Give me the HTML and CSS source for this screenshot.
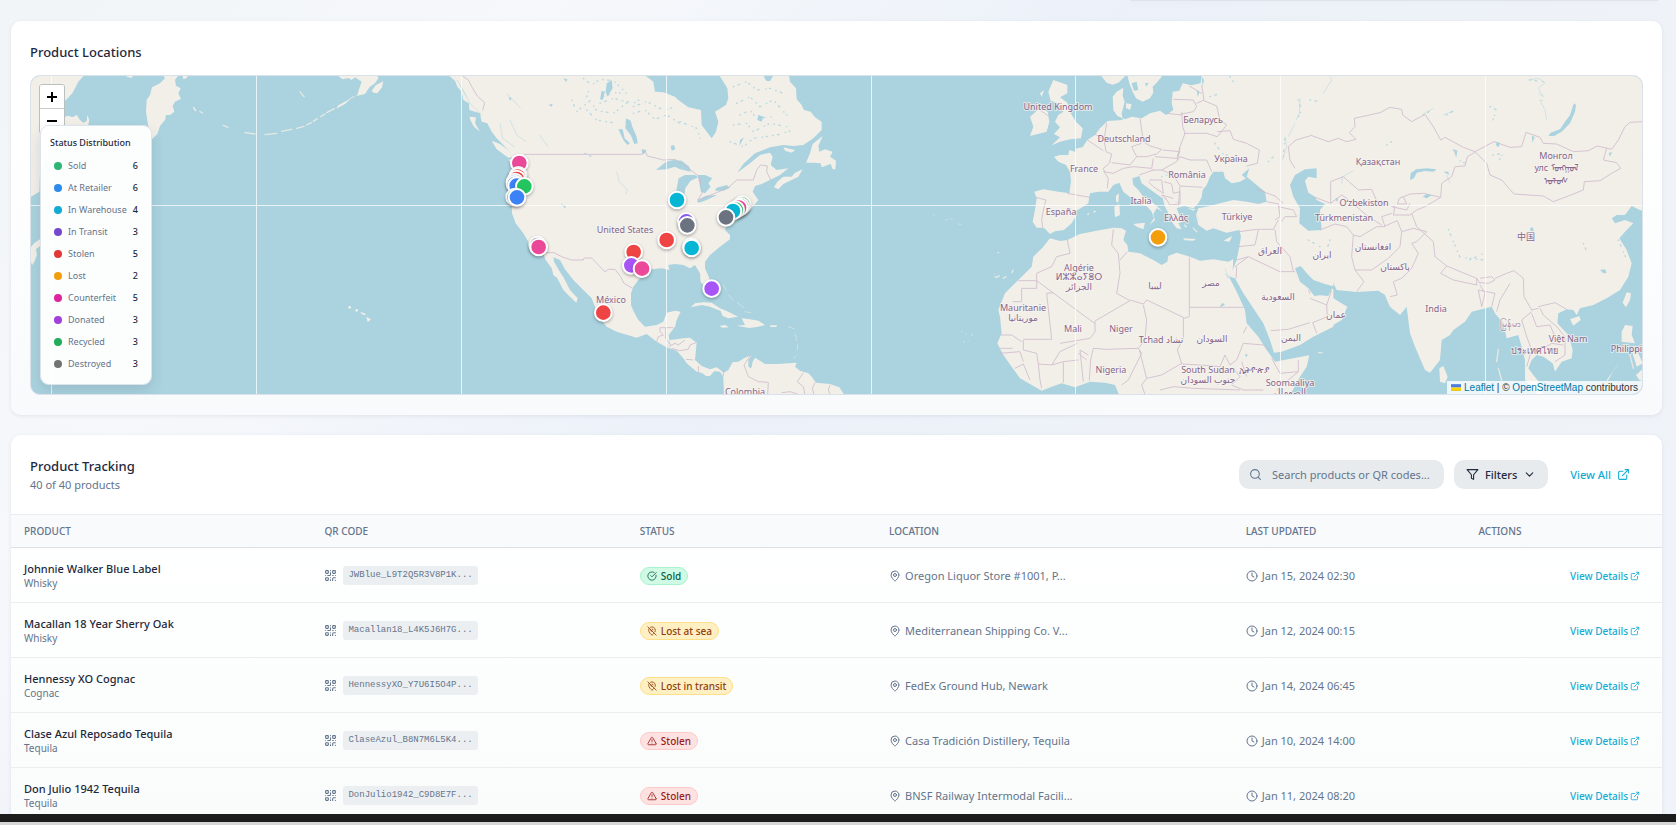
FILE: index.html
```html
<!DOCTYPE html>
<html lang="en">
<head>
<meta charset="utf-8">
<title>Product Tracking</title>
<link rel="stylesheet" href="styles.css">
</head>
<body>
<svg class="sprite" aria-hidden="true">
  <symbol id="i-search" viewBox="0 0 24 24"><circle cx="11" cy="11" r="8"/><path d="m21 21-4.3-4.3"/></symbol>
  <symbol id="i-filter" viewBox="0 0 24 24"><path d="M22 3H2l8 9.46V19l4 2v-8.54L22 3z"/></symbol>
  <symbol id="i-chevron" viewBox="0 0 24 24"><path d="m6 9 6 6 6-6"/></symbol>
  <symbol id="i-external" viewBox="0 0 24 24"><path d="M15 3h6v6"/><path d="M10 14 21 3"/><path d="M18 13v6a2 2 0 0 1-2 2H5a2 2 0 0 1-2-2V8a2 2 0 0 1 2-2h6"/></symbol>
  <symbol id="i-clock" viewBox="0 0 24 24"><circle cx="12" cy="12" r="10"/><path d="M12 6v6l4 2"/></symbol>
  <symbol id="i-pin" viewBox="0 0 24 24"><path d="M20 10c0 4.99-5.54 10.19-7.4 11.8a1 1 0 0 1-1.2 0C9.54 20.19 4 14.99 4 10a8 8 0 0 1 16 0"/><circle cx="12" cy="10" r="3"/></symbol>
  <symbol id="i-pin-off" viewBox="0 0 24 24"><path d="M12.75 7.09a3 3 0 0 1 2.16 2.16"/><path d="M17.07 17.07c-1.63 2.17-3.53 3.9-4.47 4.73a1 1 0 0 1-1.2 0C9.54 20.19 4 14.99 4 10a8 8 0 0 1 1.43-4.57"/><path d="m2 2 20 20"/><path d="M8.47 2.82A8 8 0 0 1 20 10c0 1.18-.31 2.38-.82 3.53"/><path d="M9.16 9.16a3 3 0 0 0 3.68 3.68"/></symbol>
  <symbol id="i-check" viewBox="0 0 24 24"><path d="M21.8 10A10 10 0 1 1 17 3.34"/><path d="m9 11 3 3L22 4"/></symbol>
  <symbol id="i-alert" viewBox="0 0 24 24"><path d="m21.73 18-8-14a2 2 0 0 0-3.48 0l-8 14A2 2 0 0 0 4 21h16a2 2 0 0 0 1.73-3"/><path d="M12 9v4"/><path d="M12 17h.01"/></symbol>
  <symbol id="i-qr" viewBox="0 0 24 24"><rect x="3" y="3" width="5" height="5" rx="1"/><rect x="16" y="3" width="5" height="5" rx="1"/><rect x="3" y="16" width="5" height="5" rx="1"/><path d="M21 16h-3a2 2 0 0 0-2 2v3M21 21v.01M12 7v3a2 2 0 0 1-2 2H7M3 12h.01M12 3h.01M12 16v.01M16 12h1M21 12v.01M12 21v-1"/></symbol>
</svg>

<main class="page">
  <div class="previous-card"></div>

  <section class="card locations">
    <h2 class="card-title">Product Locations</h2>
    <div class="map">
      <svg class="map-canvas" viewBox="31 76 1611 318" preserveAspectRatio="xMidYMid slice" role="img" aria-label="World map of product locations">
        <!-- North Pacific -->
        <g class="land" transform="scale(.33333)">
          <path d="M90,226H252L235,245 217,280 195,303 193,375 160,430 120,520 118,575 90,592Z"/>
          <path d="M195,350 205,347 217,352 230,345 240,360 250,368 260,363 262,345 268,360 264,378H195Z"/>
          <path d="M490,226H535L525,240 528,257 542,265 535,280 543,296 525,305 518,318 523,335 510,345 498,345 495,360 480,378 472,402 456,418 444,375 438,335 440,300 450,285 456,262 480,250 495,235Z"/>
          <path d="M90,745 104,728 120,718V738L108,748 111,765 103,785 96,796 90,775Z"/>
          <path d="M1018,230 1028,238 1045,234 1055,240 1065,232 1085,245 1078,265 1072,285 1050,298 1035,312 1008,326 1015,316 1040,302 1058,290 1095,282 1108,262 1125,250 1135,235 1132,226H1015Z"/>
          <path d="M1115,272 1128,255 1150,244 1146,262 1132,280 1120,278Z"/>
          <path d="M378,226H402L394,233 382,231ZM548,226H565L560,234 550,238ZM578,320 583,322 590,334 584,332Z"/>
          <path class="islands" d="M1003,326 980,338M975,342 962,350M952,356 940,364M934,368 920,375M912,379 890,385M875,388 845,394M830,400 795,404M765,402 735,398M670,376 684,382M600,335 608,339M900,275 912,290"/>
          <circle cx="1049" cy="922" r="4"/><circle cx="1070" cy="931" r="4"/><path d="M1080,936 1094,940 1098,945 1088,944ZM1099,950 1113,958 1103,967Z"/>
        </g>
        <!-- Americas -->
        <g transform="translate(400 60) scale(.33333)">
          <g class="land">
            <path d="M146,46 165,62 172,80 185,95 190,120 207,130 208,150 240,160 245,185 262,190 275,215 290,235 325,270 345,300 325,298 338,320 333,350 325,410 335,430 336,460 347,490 370,520 385,545 410,552 430,580 437,600 455,625 460,645 472,655 490,690 510,710 529,728 533,715 510,690 492,655 475,628 462,605 460,592 480,600 495,628 520,660 550,690 575,715 585,740 600,775 620,800 650,815 710,833 740,822 770,845 800,862 830,872 850,895 860,910 890,935 905,938 918,948 930,948 943,933 960,935 970,950 972,1006H1334L1318,982 1290,972 1248,968 1235,950 1225,940 1200,932 1185,920 1190,908 1130,912 1095,912 1065,893 1058,905 1054,925 1045,920 1045,900 1055,885 1035,893 1015,905 998,907 985,930 972,938 950,922 930,928 905,918 885,900 890,848 870,833 850,835 830,838 808,840 806,825 825,800 830,780 842,755 825,752 800,758 790,785 770,795 735,800 715,780 700,752 693,735 693,700 700,680 715,660 755,628 785,625 808,630 805,615 825,612 850,615 870,625 885,615 900,640 902,665 918,685 935,690 928,655 915,625 915,605 930,585 960,560 990,538 990,525 975,510 985,480 997,492 1020,470 1050,450 1075,420 1058,395 1065,378 1085,372 1110,360 1140,345 1165,325 1130,330 1112,315 1118,290 1110,278 1080,285 1050,310 1012,338 1030,312 1065,280 1110,262 1150,255 1180,258 1210,255 1240,235 1265,210 1265,185 1245,172 1232,155 1212,150 1205,135 1190,118 1188,85 1170,65 1167,46H958L970,65 982,85 985,115 978,135 945,155 955,185 948,215 935,235 905,195 903,150 865,142 835,120 825,110 790,97 765,95 760,65 735,46Z"/>
            <path d="M1122,382 1132,365 1150,350 1175,350 1185,338 1208,328 1195,350 1150,372 1135,388ZM1150,262 1185,270 1175,278 1155,272ZM1218,308 1230,280 1238,252 1268,228 1255,258 1258,275 1275,268 1298,275 1290,290 1308,302 1306,328 1298,328 1292,312 1265,322 1262,310 1240,308Z"/>
            <path d="M275,242 300,252 325,270 342,292 325,293 290,268ZM208,170 228,172 225,190 240,215 222,200 212,182Z"/>
            <path d="M872,742 885,730 910,727 935,728 960,745 985,755 1014,770 985,775 968,768 962,753 930,740 905,735ZM1010,797 1035,795 1025,775 1050,778 1075,782 1095,795 1075,800 1048,804ZM958,798 975,795 987,802 968,803ZM1110,796H1130V801H1112Z"/>
            <path class="islands faint" d="M970,675 978,690M985,705 1000,720M1012,728 1030,742M1035,755 1052,758M1165,800 1182,806M1186,822 1190,842M1193,852 1192,870M1190,885 1180,895"/>
          </g>
          <g class="water">
            <path d="M768,330 798,305 820,300 845,302 868,320 872,335 840,328 825,320 800,328ZM828,395 836,355 855,345 885,345 895,352 872,362 856,385 852,415 840,420ZM893,345 915,345 937,355 925,370 932,380 915,400 903,395ZM890,423 918,407 952,405 920,420 897,428ZM945,392 950,383 980,375 990,383 970,392Z"/>
            <path d="M678,175 692,182 697,200 710,230 713,250 703,252 692,225 676,205ZM655,208 668,208 674,235 690,250 682,255 670,240ZM812,258 822,255 826,268 815,272ZM725,268 740,270 732,282 726,280ZM620,70 635,60 638,85 622,110 617,95ZM605,92 615,95 608,120 600,118ZM1090,46 1120,46 1110,64 1098,62ZM1075,165 1090,170 1085,185 1072,180ZM1020,240 1032,232 1018,258ZM483,430 498,440 494,444ZM490,55 502,58 498,66ZM445,134 458,132 455,140ZM325,110 335,116 330,122Z"/>
            <path class="lakes" d="M550,55 575,75 600,58 640,62 670,90 M515,120 530,155 570,122 590,152 640,160 680,130 M560,150 590,180 650,190 M600,130 640,115 700,130 730,112 M610,110 640,98 690,100 M700,160 735,150 765,178 800,165 840,190 M700,140 740,125 790,150 830,140 M840,185 890,205 900,235 M1000,80 1040,65 1070,90 1110,85 1150,100 M1010,130 1050,110 1080,140 1120,120 1160,165 M1000,195 1040,190 1060,215 1110,190 1160,200 M990,245 1030,260 1060,235 1130,225 1180,210 M555,280 585,295 M1020,165 1050,150 1070,175 1120,170 M560,110 565,95"/>
            <path class="creeks" d="M650,335 658,365 682,390 678,402M330,180 350,225 378,245M300,190 308,235 345,262M172,60 210,130 245,165M180,75 200,110M320,100 362,145M418,225 445,260M800,860 812,840"/>
          </g>
          <g class="border">
            <path d="M188,48 205,60 215,80 232,108 254,128 248,152M372,283H727L735,273 742,288 770,295 790,300 825,298 862,322 900,352 906,400 893,420 945,400 985,383 1010,360 1060,360 1070,330 1082,315 1102,318 1100,335 1112,360"/>
            <path d="M432,578 462,578 485,590 515,600 550,600 552,594 575,594 600,620 615,636 625,628 645,628 662,650 672,670 698,685"/>
            <path d="M770,845 775,830 790,825 780,815V803H820M797,803V835L812,855M806,860 825,850 835,855 855,840M815,865 838,872 865,868 870,855 888,848M858,898 880,900M895,918V938M970,948V930"/>
            <path d="M1052,885 1032,915 1045,950 1075,965 1105,967 1103,1004M1145,998 1170,995 1195,1003M1210,938 1192,965 1210,980 1215,1004M1245,968 1237,985 1242,1004M1290,975 1285,990 1290,1004"/>
          </g>
        </g>
        <!-- Atlantic islands -->
        <g class="land" transform="translate(800 60) scale(.33333)">
          <path class="islands faint" d="M400,465h2M437,480 444,479M453,477h3M475,492 483,493M583,641v3M592,651h2M484,815h2M495,822h2M515,822v5M490,846h4M505,843h1"/>
        </g>
        <!-- Eurasia and Africa -->
        <g transform="translate(980 60) scale(.33333)">
          <g class="land">
            <path d="M1060,46H665L662,70 635,76 608,70 598,92 578,95 575,130 580,150 558,165 540,152 510,160 485,175 455,170 435,178 412,168 400,150 398,110 410,95 430,83 428,108 434,125 425,160 428,180 383,183 360,205 345,225 322,240 308,262 290,265 285,275 268,270 265,285 240,285 222,290 235,305 258,315 270,335 273,365 268,400 235,395 190,388 163,395 170,415 165,450 158,485 170,503 192,503 210,522 225,514 252,510 275,490 288,468 285,455 325,430 330,400 355,395 385,395 400,375 418,368 430,395 455,415 490,435 502,440 515,455 522,475 508,495 525,480 520,462 530,445 550,455 520,430 490,410 475,390 460,375 457,355 478,348 485,370 520,395 548,415 555,440 568,465 575,485 590,505 605,508 595,490 608,485 598,465 590,445 612,438 640,445 655,430 665,412 668,390 680,375 690,350 700,335 730,335 735,355 755,370 780,365 798,355 785,345 808,325 800,350 830,375 855,395 860,425 835,432 800,425 760,420 720,430 690,438 655,445 648,465 655,495 680,512 700,505 740,518 778,510 783,530 778,560 770,600 760,625 750,650 765,655 790,700 820,745 850,790 870,840 882,878 905,875 960,855 1000,830 1060,800Z"/>
            <path d="M210,535 240,543 262,540 300,522 350,512 400,503 425,505 438,512 430,540 442,555 445,575 480,580 520,600 545,615 562,605 565,588 590,578 630,590 660,602 700,598 745,605 760,598 758,635 750,650 740,640 730,618 752,660 770,695 795,750 800,790 835,830 860,870 885,905 940,895 988,886 980,920 960,950 930,1006H418L405,975 375,968 330,965 285,982 245,970 215,980 185,992 150,972 120,955 95,920 70,885 52,850 65,820 60,770 55,750 75,700 115,660 155,620 160,590 190,560Z"/>
            <path d="M220,60 262,75 262,100 240,112 262,128 272,160 288,185 308,205 303,235 270,238 240,245 215,256 240,232 222,222 240,202 225,185 235,165 250,155 235,130 212,122 205,95ZM150,170 180,145 203,155 208,185 200,215 150,228 160,200ZM180,100 192,90 185,110ZM362,46H438L415,68 398,74 380,68ZM442,46H548L530,68 518,80 520,98 510,115 488,125 468,115 458,95 448,70ZM438,130 455,133 450,150 438,143Z"/>
            <path d="M460,492 495,488 490,508 470,500ZM403,440 418,433 420,465 405,472ZM408,408 417,400 415,428 408,424ZM608,535 648,537 640,542 615,541ZM730,542 757,528 748,545ZM320,463 328,458 325,466ZM340,452 350,454 342,458ZM622,445 645,447 642,452ZM612,492 622,500 615,502Z"/>
            <path class="islands" d="M45,652 58,648M70,655 78,650M95,638 100,630M54,578h2M650,462 655,478M640,505 650,515M585,425 600,428"/>
          </g>
          <g class="border">
            <path d="M180,150 205,168M168,412 198,420 190,450 185,480 188,502M262,400 330,412M322,240 370,272M345,222 375,240M380,190 372,240 378,275 395,282 388,310 370,325 375,340 385,355 382,385M395,308 450,315 470,290 455,260 485,250M480,175 490,245 510,258 545,268 530,282 500,290 470,290M370,335 400,340 430,325 460,320 515,325 520,295M548,270 600,275 590,295 525,290M515,330 545,330 590,305 600,290 630,300 680,300 695,335M520,330 478,345M508,360 545,360 550,400 520,380 505,365M545,330 580,345 600,378 668,382M552,365 575,372 580,400 600,395 600,432 570,435 555,412M560,420 545,405 580,415M600,380 595,440M605,155 608,200 615,220 600,260 592,290M560,160 608,165M580,118 640,120 650,140 640,155 605,162M665,75 672,120 650,130M672,122 710,138 720,180 740,195 712,230 680,220 612,220M712,215 750,212 760,238 800,250 838,270 832,310 800,318M628,78 665,100M600,265 592,300M830,388 885,408 910,430M860,425 895,432 900,470 885,480M895,440 940,450 950,470 915,470 905,485M778,515 830,508 880,508 895,480M885,508 890,545 930,590 940,635M775,560 825,555 835,510M770,600 805,590 765,620M805,590 900,635 945,635M925,260 948,240 1000,225 1045,230M925,260 930,300 945,325"/>
            <path d="M262,540 270,580 230,590 215,620 170,640V685M170,685H125V725H98M170,662 330,780 345,790M115,662 170,662M200,700 220,698M200,700 215,838H130M345,785V815L330,835 240,850M345,783 450,722 410,700 420,640 415,580 395,555 400,508M420,600 442,575M450,720 490,732 500,720 610,772V835M628,592V770L612,775M630,742H790M490,735 500,780 495,840 475,865M610,835 592,870 605,910 545,945 500,955 478,870M340,865 380,868 475,865 485,880 445,960 425,975M340,865 332,900 328,962M325,885 300,870 310,965M295,880 320,900M292,850 240,875 215,915 250,905 295,900M250,905V968M215,915 175,912 180,960 185,985M130,840V870L170,880 175,912M62,825 95,825 125,845M60,865H98M60,880 120,875 130,905M105,925 130,912 150,960M605,912 660,915 720,920 735,885 750,915 770,900 790,850 850,855 870,870M760,925 780,950 755,975 790,990 850,990M790,820 800,800M875,895 900,940 955,935M955,900V935L890,990M540,990 580,980 640,985 780,990M800,950 785,905M500,955 485,975 495,1004M872,812 925,808 1000,785 1060,760M1000,785 1012,815M985,690 1000,720 1050,735M768,655 770,620"/>
          </g>
        </g>
        <g transform="translate(1310 60) scale(.33333)">
          <g class="land">
            <path d="M0,46H1002V455L985,448 965,438 945,465 920,465 905,475 915,490 945,480 970,490 945,515 928,535 950,570 965,610 955,650 930,690 890,715 850,735 810,745 800,765 790,750 770,748 745,760 742,790 775,825 788,870 785,895 755,905 735,935 728,910 700,890 680,885 665,900 655,925 670,945 690,970 700,1006H685L645,960 645,900 635,860 625,825 590,835 580,790 555,760 545,740 485,755 465,785 430,810 420,825 395,840 390,900 360,938 345,930 315,860 300,820 290,740 270,765 240,740 230,718 225,705 205,692 140,696 80,690 70,668 40,675 0,655Z"/>
            <path d="M0,700 35,710 65,683 70,715 112,740 95,780 45,810 0,830ZM388,925 400,918 413,950 405,970 390,965ZM780,778 808,768 812,780 790,797ZM938,728 950,697 963,700 960,720 948,742ZM935,815 945,795 968,798 965,825 975,850 935,845ZM965,870 985,880 998,910 980,920ZM890,960 932,903 915,925 893,963ZM978,945 1000,925V965L988,960Z"/>
            <path class="islands" d="M565,868 560,905M565,925 575,960M26,878h10M940,855 955,865M970,860 985,862M960,885 970,925"/>
          </g>
          <g class="border">
            <path d="M0,225 55,245 85,235 110,245 138,238 118,218 135,200 133,175 210,158 240,142 275,148 278,165 305,185 345,163 370,200 392,240 405,232 460,262 495,275 552,245 600,262 635,260 648,217 690,232 700,250 740,252 790,275 835,272 862,258 905,268 925,240 945,200 960,187 998,185"/>
            <path d="M495,275 530,310 540,345 575,360 612,402 700,408 730,425 775,408 820,390 823,365 870,362 905,340 932,325 920,308 880,300 890,265M495,277 472,290 465,318 435,320 425,350 395,370 392,412 340,400 300,402 268,415 262,432 290,432 280,410M62,430V365L100,350 145,390 185,388 200,422 235,435 255,440 250,465 300,465 320,450 345,440 392,412M20,440 10,410 62,430 95,405 110,415 175,470 215,495M245,440 290,450 300,430M30,510 75,492 110,500 130,525 150,530 200,500 225,500 215,470 245,460M225,498 262,482 275,515 310,505 350,515 320,545 305,550M130,525 125,590 135,630 185,630 235,595 270,560 275,515M135,630 162,665 140,695M305,550 325,580 305,625 275,655 250,665 262,705 240,710M305,460 320,500 370,545 375,590 410,618 500,655 510,670M410,618 392,640 430,660 500,675 500,655M510,655 545,650 555,660 535,670 508,668M510,675 525,700 515,740 505,690 555,700 545,740M555,655 590,640 612,632 640,655 642,710 665,750 685,745M600,670 570,720 560,755M685,740 735,728 770,748M665,755 635,780 650,830 665,870 650,920M665,760 680,800 720,795 735,830M690,745 700,765 740,800 765,830 765,885 735,905M700,865 725,850 760,855M0,715 50,735 65,690M50,735 52,770 8,788 20,820"/>
          </g>
          <g class="water">
            <path d="M300,360 302,340 318,328 350,325 380,328 370,335 345,333 320,338 312,355ZM715,228 722,218 750,208 765,185 780,165 792,130 798,135 795,155 780,190 755,215 732,228ZM338,410 350,402 365,406 350,415ZM660,505 668,502 672,512 662,514ZM870,630 885,628 890,638 880,640ZM896,280 906,275 900,290ZM560,245 570,250 565,262 558,255ZM665,228 674,230 668,248ZM75,418 85,412 82,425ZM432,268 442,272 440,285 434,280ZM400,335 415,335 417,345Z"/>
            <path class="lakes" d="M430,270 445,300 470,312 M548,285 580,280 565,305 M540,140 560,150 550,175 545,195 M415,508 450,592 520,600 M820,550 830,575 M925,540 950,600 M480,600 520,580 M410,165 435,150 M340,165 365,150 M660,60 700,65 M60,540 50,570 M230,255 245,245 M0,120 30,125"/>
            <path class="creeks" d="M655,60 685,55 705,68 685,85 700,110 685,100M690,120 705,150 710,180M688,120 700,122M95,370 98,350 130,332M400,165 432,152M340,162 370,145M60,50 65,60 40,100M410,345 420,370"/>
          </g>
        </g>
        <g class="water" transform="translate(980 60) scale(.33333)">
          <path d="M930,375 945,345 975,328 1010,325V355L985,350 975,362 985,398 1005,410 1010,420 1035,432 1020,450 1025,510 985,512 958,490 960,445 940,410Z"/>
          <path d="M945,625 962,618 985,645 1000,660 1035,672 1065,680 1065,688 1055,686 1045,708 1020,706 1003,708 985,685 960,665Z"/>
          <path d="M455,70 470,65 475,90 462,92ZM495,70 505,68 500,80ZM650,90 658,98 653,110ZM665,50 672,60 668,80ZM795,882 804,884 798,892ZM718,742 728,728 735,735Z"/>
          <path class="lakes" d="M955,120 965,150 950,180M690,110 720,100M705,250 725,280 790,300M865,305 880,290M910,290 915,230M985,540 1020,560M545,350 560,345M750,50 760,65"/>
          <path class="creeks" d="M735,625 745,655 735,640M960,115 958,160 948,180M915,230 920,260 908,300M945,190 925,230"/>
        </g>
        <path class="tile-seams" d="M51.500,76V394M256.500,76V394M461.500,76V394M666.500,76V394M871.500,76V394M1075.500,76V394M1280.500,76V394M1485.500,76V394M0,205.500H1676"/>
        <g class="labels">
          <text x="625" y="233">United States</text><text x="611" y="303">México</text><text x="745" y="395">Colombia</text>
          <text x="1058" y="110">United Kingdom</text><text x="1124" y="142">Deutschland</text><text x="1084" y="172">France</text>
          <text x="1203" y="123">Беларусь</text><text x="1231" y="162">Україна</text><text x="1187" y="178">România</text>
          <text x="1141" y="204">Italia</text><text x="1061" y="215">España</text><text x="1176" y="221">Ελλάς</text><text x="1237" y="220">Türkiye</text>
          <text x="1079" y="271">Algérie</text><text x="1079" y="280">ⵍⵣⵣⴰⵢⴻⵔ</text><text x="1079" y="290">الجزائر</text>
          <text x="1155" y="289">ليبيا</text><text x="1211" y="286">مصر</text><text x="1270" y="254">العراق</text><text x="1278" y="300">السعودية</text>
          <text x="1023" y="311">Mauritanie</text><text x="1023" y="321">موريتانيا</text><text x="1073" y="332">Mali</text><text x="1121" y="332">Niger</text>
          <text x="1161" y="343">Tchad تشاد</text><text x="1212" y="342">السودان</text><text x="1291" y="341">اليمن</text><text x="1111" y="373">Nigeria</text>
          <text x="1208" y="373">South Sudan</text><text x="1208" y="383">جنوب السودان</text><text x="1254" y="373">ኢትዮጵያ</text><text x="1290" y="386">Soomaaliya</text><text x="1290" y="395">الصومال</text>
          <text x="1378" y="165">Қазақстан</text><text x="1364" y="206">Oʻzbekiston</text><text x="1344" y="221">Türkmenistan</text><text x="1322" y="258">ایران</text>
          <text x="1373" y="250">افغانستان</text><text x="1395" y="270">پاکستان</text><text x="1336" y="318">عمان</text><text x="1436" y="312">India</text>
          <text x="1556" y="159">Монгол</text><text x="1556" y="171">улс ᠮᠣᠩᠭᠣᠯ</text><text x="1556" y="184">ᠤᠯᠤᠰ</text><text x="1526" y="240">中国</text>
          <text x="1510" y="327">မြန်မာ</text><text x="1568" y="342">Việt Nam</text><text x="1534" y="354">ประเทศไทย</text><text x="1634" y="352">Philippines</text>
        </g>
        <g class="markers" transform="translate(400 60) scale(.33333)">
          <circle class="m-pink" cx="358" cy="309" r="25"/><circle class="m-green" cx="355" cy="346" r="25"/><circle class="m-red" cx="353" cy="350" r="25"/><circle class="m-red" cx="350" cy="357" r="25"/>
          <circle class="m-blue" cx="345" cy="366" r="25"/><circle class="m-blue" cx="345" cy="372" r="25"/><circle class="m-blue" cx="350" cy="377" r="25"/><circle class="m-green" cx="373" cy="379" r="25"/>
          <circle class="m-green" cx="344" cy="411" r="25"/><circle class="m-blue" cx="351" cy="412" r="25"/><circle class="m-gray" cx="413" cy="555" r="25"/><circle class="m-pink" cx="416" cy="561" r="25"/>
          <circle class="m-cyan" cx="831" cy="420" r="25"/><circle class="m-green" cx="1027" cy="434" r="25"/><circle class="m-pink" cx="1022" cy="439" r="25"/><circle class="m-pink" cx="1017" cy="443" r="25"/><circle class="m-green" cx="1007" cy="449" r="25"/><circle class="m-cyan" cx="999" cy="453" r="25"/>
          <circle class="m-gray" cx="978" cy="472" r="25"/><circle class="m-violet" cx="859" cy="484" r="25"/><circle class="m-gray" cx="862" cy="496" r="25"/><circle class="m-red" cx="800" cy="540" r="25"/>
          <circle class="m-cyan" cx="874" cy="560" r="25"/><circle class="m-cyan" cx="875" cy="564" r="25"/><circle class="m-red" cx="701" cy="576" r="25"/><circle class="m-purple" cx="694" cy="616" r="25"/>
          <circle class="m-pink" cx="726" cy="626" r="25"/><circle class="m-purple" cx="935" cy="686" r="25"/><circle class="m-red" cx="610" cy="758" r="25"/><circle class="m-amber" cx="2274" cy="532" r="25"/>
        </g>
      </svg>
      <div class="zoom-control">
        <button type="button" aria-label="Zoom in"><svg class="zoom-glyph" viewBox="0 0 12 12"><path d="M6 1v10M1 6h10"/></svg></button>
        <button type="button" aria-label="Zoom out"><svg class="zoom-glyph" viewBox="0 0 12 12"><path d="M1 6h10"/></svg></button>
      </div>
      <aside class="legend">
        <h3 class="legend-title">Status Distribution</h3>
        <ul class="legend-list">
          <li><span class="dot d-sold"></span>Sold<b>6</b></li>
          <li><span class="dot d-retailer"></span>At Retailer<b>6</b></li>
          <li><span class="dot d-warehouse"></span>In Warehouse<b>4</b></li>
          <li><span class="dot d-transit"></span>In Transit<b>3</b></li>
          <li><span class="dot d-stolen"></span>Stolen<b>5</b></li>
          <li><span class="dot d-lost"></span>Lost<b>2</b></li>
          <li><span class="dot d-counterfeit"></span>Counterfeit<b>5</b></li>
          <li><span class="dot d-donated"></span>Donated<b>3</b></li>
          <li><span class="dot d-recycled"></span>Recycled<b>3</b></li>
          <li><span class="dot d-destroyed"></span>Destroyed<b>3</b></li>
        </ul>
      </aside>
      <div class="attribution"><svg class="flag" viewBox="0 0 12 8"><path fill="#4c7be1" d="M0 0h12v4H0z"/><path fill="#ffd500" d="M0 4h12v3H0z"/><path fill="#e0bc00" d="M0 7h12v1H0z"/></svg> <a href="#leaflet">Leaflet</a> | © <a href="#osm">OpenStreetMap</a> contributors</div>
    </div>
  </section>

  <section class="card tracking">
    <header class="tracking-header">
      <div>
        <h2 class="card-title">Product Tracking</h2>
        <p class="subtitle">40 of 40 products</p>
      </div>
      <div class="controls">
        <label class="search"><svg class="icon i13"><use href="#i-search"/></svg><input type="text" placeholder="Search products or QR codes..." aria-label="Search products or QR codes"></label>
        <button type="button" class="filters"><svg class="icon i13"><use href="#i-filter"/></svg>Filters<svg class="icon i13"><use href="#i-chevron"/></svg></button>
        <a class="view-all" href="#all">View All<svg class="icon i13"><use href="#i-external"/></svg></a>
      </div>
    </header>
    <table class="products">
      <colgroup><col class="c-product"><col class="c-qr"><col class="c-status"><col class="c-location"><col class="c-updated"><col class="c-actions"></colgroup>
      <thead><tr><th scope="col">Product</th><th scope="col">QR Code</th><th scope="col">Status</th><th scope="col">Location</th><th scope="col">Last Updated</th><th scope="col">Actions</th></tr></thead>
      <tbody>
        <tr>
          <td><div class="name">Johnnie Walker Blue Label</div><div class="kind">Whisky</div></td>
          <td><div class="line qr"><svg class="icon i13"><use href="#i-qr"/></svg><code>JWBlue_L9T2Q5R3V8P1K...</code></div></td>
          <td><span class="badge sold"><svg class="icon i10"><use href="#i-check"/></svg>Sold</span></td>
          <td><div class="line"><svg class="icon i12"><use href="#i-pin"/></svg>Oregon Liquor Store #1001, P...</div></td>
          <td><div class="line"><svg class="icon i12"><use href="#i-clock"/></svg>Jan 15, 2024 02:30</div></td>
          <td class="action"><a href="#details-1">View Details<svg class="icon i10"><use href="#i-external"/></svg></a></td>
        </tr>
        <tr>
          <td><div class="name">Macallan 18 Year Sherry Oak</div><div class="kind">Whisky</div></td>
          <td><div class="line qr"><svg class="icon i13"><use href="#i-qr"/></svg><code>Macallan18_L4K5J6H7G...</code></div></td>
          <td><span class="badge lost"><svg class="icon i10"><use href="#i-pin-off"/></svg>Lost at sea</span></td>
          <td><div class="line"><svg class="icon i12"><use href="#i-pin"/></svg>Mediterranean Shipping Co. V...</div></td>
          <td><div class="line"><svg class="icon i12"><use href="#i-clock"/></svg>Jan 12, 2024 00:15</div></td>
          <td class="action"><a href="#details-2">View Details<svg class="icon i10"><use href="#i-external"/></svg></a></td>
        </tr>
        <tr>
          <td><div class="name">Hennessy XO Cognac</div><div class="kind">Cognac</div></td>
          <td><div class="line qr"><svg class="icon i13"><use href="#i-qr"/></svg><code>HennessyXO_Y7U6I5O4P...</code></div></td>
          <td><span class="badge lost"><svg class="icon i10"><use href="#i-pin-off"/></svg>Lost in transit</span></td>
          <td><div class="line"><svg class="icon i12"><use href="#i-pin"/></svg>FedEx Ground Hub, Newark</div></td>
          <td><div class="line"><svg class="icon i12"><use href="#i-clock"/></svg>Jan 14, 2024 06:45</div></td>
          <td class="action"><a href="#details-3">View Details<svg class="icon i10"><use href="#i-external"/></svg></a></td>
        </tr>
        <tr>
          <td><div class="name">Clase Azul Reposado Tequila</div><div class="kind">Tequila</div></td>
          <td><div class="line qr"><svg class="icon i13"><use href="#i-qr"/></svg><code>ClaseAzul_B8N7M6L5K4...</code></div></td>
          <td><span class="badge stolen"><svg class="icon i10"><use href="#i-alert"/></svg>Stolen</span></td>
          <td><div class="line"><svg class="icon i12"><use href="#i-pin"/></svg>Casa Tradición Distillery, Tequila</div></td>
          <td><div class="line"><svg class="icon i12"><use href="#i-clock"/></svg>Jan 10, 2024 14:00</div></td>
          <td class="action"><a href="#details-4">View Details<svg class="icon i10"><use href="#i-external"/></svg></a></td>
        </tr>
        <tr>
          <td><div class="name">Don Julio 1942 Tequila</div><div class="kind">Tequila</div></td>
          <td><div class="line qr"><svg class="icon i13"><use href="#i-qr"/></svg><code>DonJulio1942_C9D8E7F...</code></div></td>
          <td><span class="badge stolen"><svg class="icon i10"><use href="#i-alert"/></svg>Stolen</span></td>
          <td><div class="line"><svg class="icon i12"><use href="#i-pin"/></svg>BNSF Railway Intermodal Facili...</div></td>
          <td><div class="line"><svg class="icon i12"><use href="#i-clock"/></svg>Jan 11, 2024 08:20</div></td>
          <td class="action"><a href="#details-5">View Details<svg class="icon i10"><use href="#i-external"/></svg></a></td>
        </tr>
      </tbody>
    </table>
  </section>
</main>
<div class="bottom-bar"></div>
</body>
</html>
```
FILE: styles.css
```css
* { box-sizing: border-box; }
body {
  margin: 0;
  height: 100vh;
  display: flex;
  flex-direction: column;
  overflow: hidden;
  font-family: "Noto Sans", "Open Sans", sans-serif;
  font-size: 11px;
  line-height: 16px;
  color: #1e293b;
  background: linear-gradient(135deg, #f1f5f8 0%, #f6f8fb 22%, #ecf1f9 45%, #eff3f8 70%, #f0f3f9 100%);
}
h2, h3, p, ul { margin: 0; padding: 0; }
a { text-decoration: none; }
.sprite { position: absolute; width: 0; height: 0; }
.icon { flex: none; fill: none; stroke: currentColor; stroke-width: 2; stroke-linecap: round; stroke-linejoin: round; }
.i10 { width: 10px; height: 10px; }
.i12 { width: 12px; height: 12px; }
.i13 { width: 13px; height: 13px; }

.page {
  flex: 1;
  min-height: 0;
  overflow: hidden;
  padding: 0 14px 0 11px;
  display: flex;
  flex-direction: column;
  gap: 20px;
}
.previous-card {
  flex: none;
  align-self: flex-end;
  width: 32%;
  height: 1px;
  margin-right: 4px;
  background: #dfe4ea;
  box-shadow: 0 2px 5px rgba(30, 41, 59, .06);
}
.card {
  flex: none;
  border-radius: 10px;
  background: linear-gradient(180deg, #fff 0%, #fff 25%, #f8fafc 100%);
  box-shadow: 0 1px 4px rgba(30, 41, 59, .09);
}
.card-title { font-size: 13px; line-height: 20px; font-weight: 500; }

/* Map */
.locations { padding: 21px 19px 20px; display: flex; flex-direction: column; gap: 13px; }
.map {
  position: relative;
  height: 320px;
  border: 1px solid #dbe1e9;
  border-radius: 10px;
  overflow: hidden;
  background: #aad3df;
}
.map-canvas { display: block; width: 100%; height: 100%; }
.land { fill: #f2efe9; }
.water { fill: #aad3df; }
.islands { fill: none; stroke: #e6e8e4; stroke-width: 4; stroke-linecap: round; }
.faint { stroke-width: 3; opacity: .6; }
.lakes { fill: none; stroke: #aad3df; stroke-width: 4; stroke-dasharray: 2 13 5 19 1 11 3 16; stroke-linecap: round; opacity: .8; }
.creeks { fill: none; stroke: #aad3df; stroke-width: 2; opacity: .7; }
.border { fill: none; stroke: #cdb9cb; stroke-width: 3; stroke-linejoin: round; opacity: .8; }
.tile-seams { stroke: #fff; stroke-width: 1; opacity: .75; }
.labels text {
  font-family: "Noto Sans", "Noto Sans CJK SC", "DejaVu Sans", sans-serif;
  font-size: 9px;
  text-anchor: middle;
  fill: #86668a;
  stroke: #f7f5f2;
  stroke-width: 2;
  stroke-linejoin: round;
  stroke-opacity: .7;
  paint-order: stroke;
}
.markers circle { stroke: #fff; stroke-width: 6; filter: drop-shadow(0 4px 5px rgba(0, 0, 0, .3)); }
.m-pink { fill: #ec4899; }
.m-red { fill: #ef4444; }
.m-blue { fill: #3b82f6; }
.m-green { fill: #22c55e; }
.m-cyan { fill: #06b6d4; }
.m-gray { fill: #6b7280; }
.m-violet { fill: #8b5cf6; }
.m-purple { fill: #a855f7; }
.m-amber { fill: #f59e0b; }

.zoom-control {
  position: absolute;
  top: 8px;
  left: 8px;
  width: 26px;
  border: 1px solid #b9c0c0;
  border-radius: 3px;
  overflow: hidden;
}
.zoom-control button {
  display: flex;
  align-items: center;
  justify-content: center;
  width: 100%;
  height: 24px;
  padding: 0;
  border: 0;
  border-bottom: 1px solid #ccc;
  background: #fff;
}
.zoom-glyph { width: 12px; height: 12px; fill: none; stroke: #000; stroke-width: 2; }
.legend {
  position: absolute;
  left: 9px;
  bottom: 9px;
  width: 112px;
  padding: 11px 9px 12px;
  border: 1px solid #dde3ea;
  border-radius: 9px;
  background: rgba(255, 255, 255, .97);
  box-shadow: 0 6px 14px rgba(30, 41, 59, .12);
}
.legend-title { font-size: 9px; line-height: 12px; font-weight: 500; margin-bottom: 9px; white-space: nowrap; }
.legend-list { list-style: none; font-size: 9px; line-height: 16px; color: #64748b; display: grid; row-gap: 6px; }
.legend-list li { display: flex; align-items: center; padding: 0 4px; white-space: nowrap; }
.legend-list b { margin-left: auto; font-weight: 500; color: #1e293b; }
.dot { width: 8px; height: 8px; margin-right: 6px; border-radius: 50%; }
.d-sold { background: #2fb574; }
.d-retailer { background: #2b8cee; }
.d-warehouse { background: #11acd3; }
.d-transit { background: #7547cf; }
.d-stolen { background: #e23838; }
.d-lost { background: #f59e0b; }
.d-counterfeit { background: #de259d; }
.d-donated { background: #a43fdb; }
.d-recycled { background: #22ad5b; }
.d-destroyed { background: #737373; }
.attribution {
  position: absolute;
  right: 0;
  bottom: 0;
  padding: 0 4px;
  font: 10px/13px "Liberation Sans", Arial, sans-serif;
  color: #333;
  background: rgba(255, 255, 255, .8);
}
.attribution a { color: #0078a8; }
.flag { width: 10px; height: 7px; }

/* Tracking */
.tracking { background: linear-gradient(180deg, #fff 0, #fff 80px, #fafcfc 380px); overflow: hidden; }
.tracking-header {
  display: flex;
  align-items: center;
  justify-content: space-between;
  height: 79px;
  padding: 0 20px 0 19px;
}
.subtitle { margin-top: 1px; color: #64748b; }
.controls { display: flex; align-items: center; gap: 10px; }
.search {
  display: flex;
  align-items: center;
  gap: 10px;
  width: 205px;
  height: 29px;
  padding: 0 6px 0 10px;
  border-radius: 10px;
  background: #e7ebee;
  color: #64748b;
}
.search input { flex: 1; min-width: 0; padding: 0; border: 0; outline: 0; background: none; font: inherit; color: #1e293b; }
.search input::placeholder { color: #64748b; opacity: 1; }
.filters {
  display: flex;
  align-items: center;
  gap: 6px;
  height: 29px;
  padding: 0 12px;
  border: 0;
  border-radius: 10px;
  background: #e7ebee;
  color: #1e293b;
  font: inherit;
  font-weight: 500;
}
.view-all { display: flex; align-items: center; gap: 6px; padding: 0 12px; color: #13acd4; font-weight: 500; }

.products { width: 100%; table-layout: fixed; border-collapse: separate; border-spacing: 0; }
.c-product { width: 18.2%; }
.c-qr { width: 19.1%; }
.c-status { width: 15.1%; }
.c-location { width: 21.6%; }
.c-updated { width: 14.1%; }
.c-actions { width: 11.9%; }
.products th {
  height: 34px;
  padding: 0 13px;
  border-top: 1px solid #e9edf1;
  border-bottom: 1px solid #dde1e7;
  background: #f8fafc;
  text-align: left;
  text-transform: uppercase;
  font-size: 10px;
  font-weight: 500;
  color: #64748b;
}
.products td { height: 55px; padding: 1px 13px 0; border-bottom: 1px solid #ebeef1; vertical-align: middle; }
.name { font-weight: 500; }
.kind { font-size: 10px; line-height: 13px; color: #64748b; }
.line { display: flex; align-items: center; gap: 4px; color: #64748b; white-space: nowrap; }
.qr { gap: 6px; }
.qr code {
  padding: 2px 5px;
  border-radius: 3px;
  background: #eceff2;
  font: 9px/15px "Liberation Mono", monospace;
}
.badge {
  display: inline-flex;
  align-items: center;
  gap: 4px;
  height: 18px;
  padding: 0 6px;
  border: 1px solid;
  border-radius: 9px;
  font-size: 10px;
  font-weight: 500;
  vertical-align: middle;
}
.sold { color: #065f46; background: #d1fae5; border-color: #a7f3d0; }
.lost { color: #92400e; background: #fef0c3; border-color: #fde08a; }
.stolen { color: #991b1b; background: #fee2e2; border-color: #fecaca; }
.products .action { text-align: right; padding-right: 22px; }
.action a { display: inline-flex; align-items: center; gap: 2px; color: #13acd4; font-size: 10px; font-weight: 500; }

.bottom-bar { flex: none; height: 11px; background: #1c1c1c; border-bottom: 3px solid #d6d6d6; }
```
